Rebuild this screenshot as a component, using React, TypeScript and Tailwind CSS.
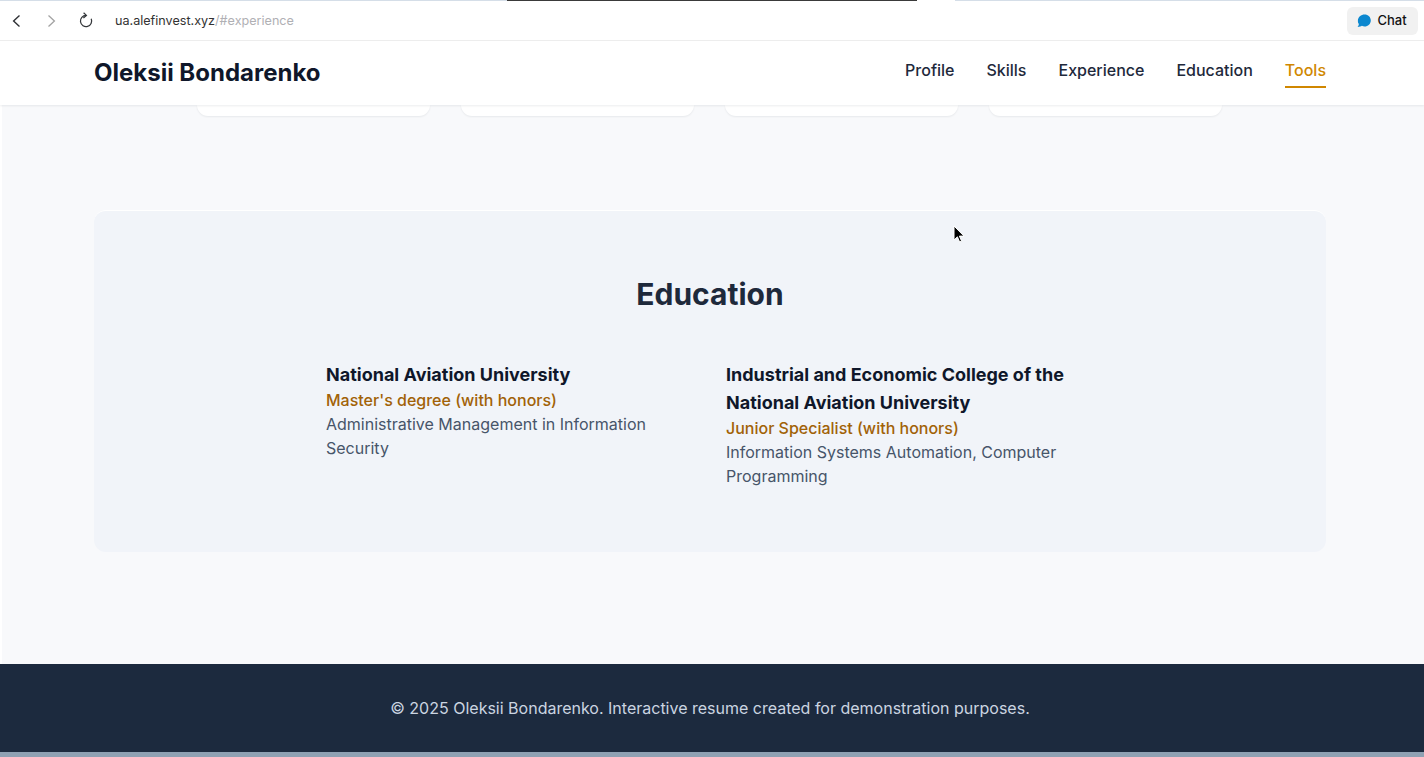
const navLinks = ["Profile", "Skills", "Experience", "Education"];

export default function App() {
  return (
    <div className="relative flex h-[757px] flex-col overflow-hidden bg-[#8fa1b3] font-['Inter',sans-serif]">
      {/* Top edge of the captured window */}
      <div className="flex h-px shrink-0 bg-[#d5dee8]">
        <div className="ml-[507px] w-[410px] bg-[#3a3a3a]" />
        <div className="w-[38px] bg-white" />
      </div>

      {/* Browser bar */}
      <div className="flex h-[40px] shrink-0 items-center border-b border-[#eeeeee] bg-white pl-[12px] pr-[6px]">
        <svg width="9" height="14" viewBox="0 0 9 14" fill="none" stroke="#2f3135" strokeWidth="1.4">
          <path d="M7.5 1.5 1.6 7l5.9 5.5" />
        </svg>
        <svg className="ml-[26px]" width="9" height="14" viewBox="0 0 9 14" fill="none" stroke="#a3a3a3" strokeWidth="1.3">
          <path d="M1.5 1.5 7.4 7l-5.9 5.5" />
        </svg>
        <svg className="ml-[22px]" width="15" height="17" viewBox="0 0 15 17" fill="none" stroke="#34373b" strokeWidth="1.25">
          <path d="M8 3.4a5.6 5.6 0 1 0 5.2 3.4" />
          <path d="M5.6.8 8.4 3.4 5.4 5.9" />
        </svg>
        <div className="ml-[22px] mt-[2px] text-[12.6px] text-[#333333]">
          ua.alefinvest.xyz<span className="text-[#b0b0b4]">/#experience</span>
        </div>
        <button className="ml-auto flex h-[28px] w-[71px] items-center justify-center gap-[5px] rounded-md bg-[#f1f1f1] pr-[2px] pt-px text-[13px] font-medium text-[#111111]">
          <svg width="16" height="16" viewBox="0 0 16 16">
            <path d="M8.6 1.4c3.5 0 6.2 2.6 6.2 6 0 3.4-2.8 6-6.2 6-1 0-1.9-.2-2.7-.6-1 .6-2.4 1.1-4.3 1.2.8-.9 1.2-1.9 1.3-3C1.9 10 1.9 8.7 1.9 7.4c0-3.4 3.2-6 6.7-6z" fill="#0b87cf" />
          </svg>
          Chat
        </button>
      </div>

      {/* Site header */}
      <header className="z-10 h-[64px] shrink-0 bg-white shadow-[0_1px_2px_rgba(15,23,42,0.08)]">
        <div className="flex h-full items-center justify-between pl-[94px] pr-[98px]">
          <div className="text-[24px] font-bold leading-8 text-[#0f172a]">Oleksii Bondarenko</div>
          <nav className="-mt-[5px] flex items-center gap-8 text-base font-medium text-[#1e293b]">
            {navLinks.map((link) => (
              <a key={link} className="border-b-2 border-transparent pb-[4px] pt-[5px]">
                {link}
              </a>
            ))}
            <a className="border-b-2 border-[#d08700] pb-[4px] pt-[5px] text-[#d08700]">Tools</a>
          </nav>
        </div>
      </header>

      <main className="h-[559px] shrink-0 border-l-2 border-white bg-[#f8f9fb]">
        {/* Bottom of the experience cards, scrolled under the header */}
        <div className="flex justify-center gap-[31px] pr-[8px]">
          {[0, 1, 2, 3].map((i) => (
            <div
              key={i}
              className="h-[11px] w-[233px] rounded-b-xl bg-white shadow-[0_1px_2px_rgba(15,23,42,0.07)]"
            />
          ))}
        </div>

        {/* Education */}
        <section className="ml-[92px] mr-[98px] mt-[94px] h-[342px] rounded-xl border-t border-white bg-[#f1f4f9] pt-[65px]">
          <h2 className="text-center text-[30px] font-bold leading-9 text-[#1e293b]">Education</h2>
          <div className="mt-[49px] flex justify-center gap-[48px] pr-[16px]">
            <div className="w-[352px]">
              <h3 className="text-lg font-bold leading-7 text-[#0f172a]">National Aviation University</h3>
              <p className="-mt-px text-base font-medium leading-6 text-[#a16207]">Master's degree (with honors)</p>
              <p className="text-base leading-6 text-[#475569]">Administrative Management in Information Security</p>
            </div>
            <div className="w-[352px]">
              <h3 className="text-lg font-bold leading-7 text-[#0f172a]">
                Industrial and Economic College of the National Aviation University
              </h3>
              <p className="-mt-px text-base font-medium leading-6 text-[#a16207]">Junior Specialist (with honors)</p>
              <p className="text-base leading-6 text-[#475569]">Information Systems Automation, Computer Programming</p>
            </div>
          </div>
        </section>
      </main>

      <footer className="flex h-[88px] shrink-0 items-center justify-center bg-[#1c2a3e] pb-px pr-[4px] text-base text-[#cbd5e1]">
        © 2025 Oleksii Bondarenko. Interactive resume created for demonstration purposes.
      </footer>

      {/* Mouse pointer caught in the capture */}
      <svg className="absolute left-[951px] top-[225px]" width="14" height="20" viewBox="0 0 14 20">
        <path d="M3 1v14l3.4-3.2 2.2 5.2 2-.9-2.2-5h4.6z" fill="#000" stroke="#fff" strokeWidth="1" />
      </svg>
    </div>
  );
}
